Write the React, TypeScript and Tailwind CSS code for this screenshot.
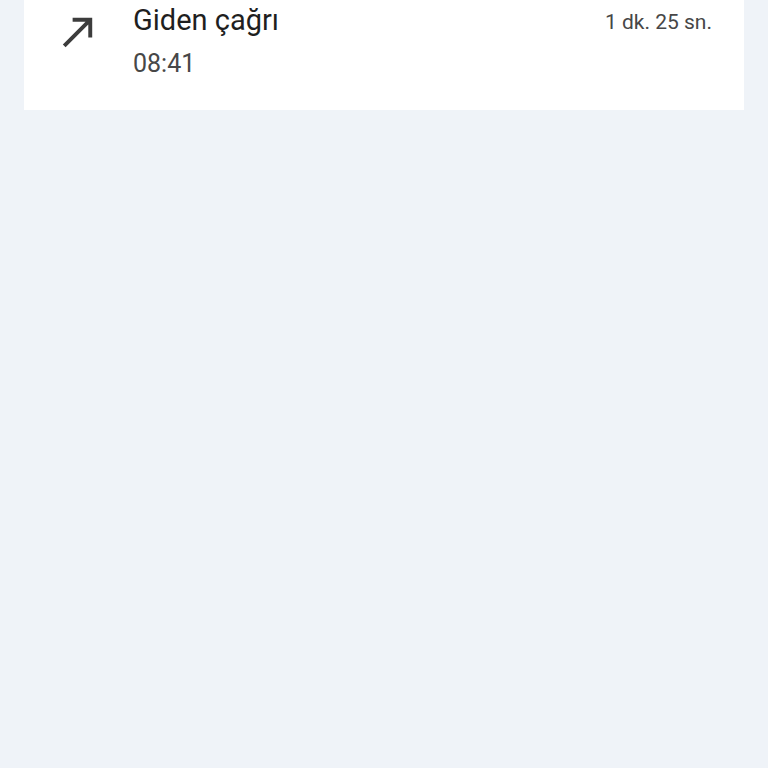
export default function App() {
  return (
    <div
      className="min-h-[768px] w-full bg-[#eff3f8]"
      style={{ fontFamily: "Roboto, 'Noto Sans', sans-serif" }}
    >
      <div className="mx-[24px] flex h-[110px] items-start bg-white">
        <div className="ml-[31px] mt-[8px] h-[47px] w-[47px] text-[#3c3c3c]">
          <svg viewBox="0 0 24 24" className="h-full w-full" fill="currentColor">
            <path d="M9 5v2h6.59L4 18.59 5.41 20 17 8.41V15h2V5z" />
          </svg>
        </div>
        <div className="ml-[31px] mt-[2px] flex flex-1 flex-col">
          <div className="text-[29px] leading-[36px] text-[#1f1f1f]">Giden çağrı</div>
          <div className="mt-[10px] text-[25px] leading-[32px] text-[#474747]">08:41</div>
        </div>
        <div className="mr-[32px] mt-[6px] text-[21px] leading-[32px] text-[#474747]">
          1 dk. 25 sn.
        </div>
      </div>
    </div>
  );
}
